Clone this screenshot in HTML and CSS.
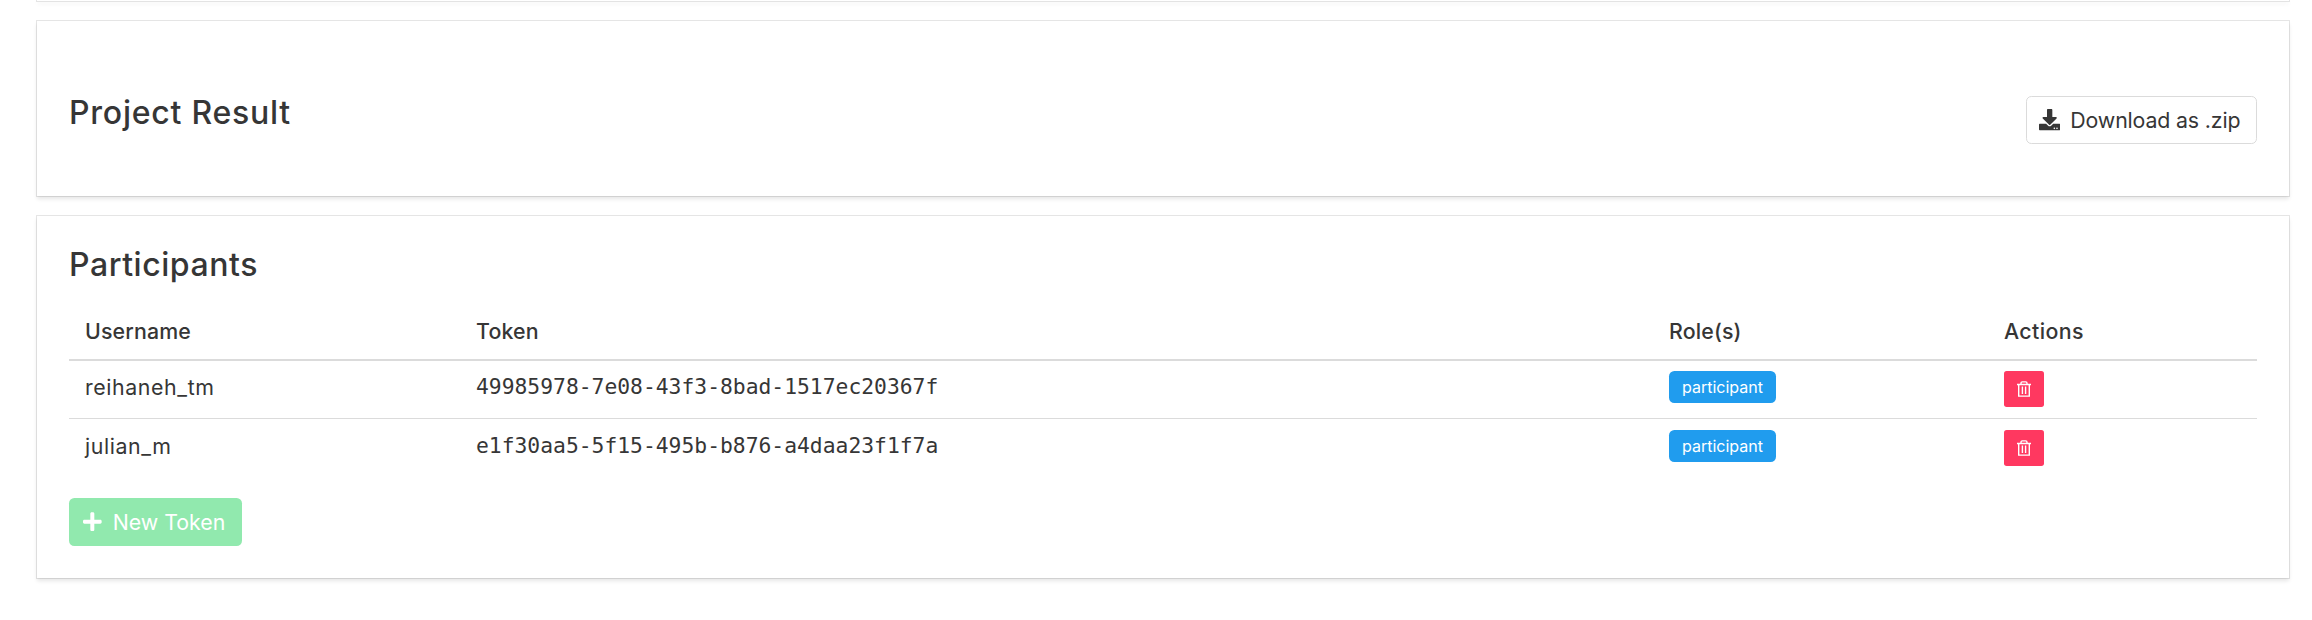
FILE: index.html
```html
<!DOCTYPE html>
<html lang="en">
<head>
<meta charset="utf-8">
<title>Project</title>
<link rel="stylesheet" href="styles.css">
</head>
<body>
<main class="page">
  <section class="box box-previous"></section>
  <section class="box box-result">
    <h2 class="title title-result">Project Result</h2>
    <button class="button button-download">
      <svg class="icon" viewBox="0 0 512 512"><path d="M216 0h80c13.300 0 24 10.700 24 24v168h87.700c17.800 0 26.700 21.500 14.100 34.100L269.700 378.300c-7.500 7.500-19.800 7.500-27.300 0L90.100 226.100c-12.600-12.600-3.700-34.100 14.100-34.100H192V24c0-13.300 10.700-24 24-24zm296 376v112c0 13.300-10.700 24-24 24H24c-13.300 0-24-10.700-24-24V376c0-13.300 10.700-24 24-24h146.700l49 49c20.100 20.100 52.500 20.100 72.600 0l49-49H488c13.300 0 24 10.700 24 24zm-124 88c0-11-9-20-20-20s-20 9-20 20 9 20 20 20 20-9 20-20zm64 0c0-11-9-20-20-20s-20 9-20 20 9 20 20 20 20-9 20-20z"/></svg>
      <span class="label-download">Download as .zip</span>
    </button>
  </section>
  <section class="box box-participants">
    <h2 class="title title-participants">Participants</h2>
    <table class="table">
      <colgroup><col class="col-user"><col class="col-token"><col class="col-role"><col class="col-actions"></colgroup>
      <thead>
        <tr><th>Username</th><th>Token</th><th>Role(s)</th><th class="th-actions">Actions</th></tr>
      </thead>
      <tbody>
        <tr>
          <td class="user">reihaneh_tm</td>
          <td class="mono">49985978-7e08-43f3-8bad-1517ec20367f</td>
          <td><span class="tag">participant</span></td>
          <td><button class="delete" aria-label="Delete"><svg class="trash" viewBox="0 0 14 16"><path d="M0 3.500h14M4 3.500V2.200Q4 .9 5.300.9h3.400Q10 .9 10 2.200v1.300M1.700 3.500v11.600h10.600V3.500M5.400 5.500v7.500M8.600 5.500v7.500"/></svg></button></td>
        </tr>
        <tr>
          <td class="user">julian_m</td>
          <td class="mono">e1f30aa5-5f15-495b-b876-a4daa23f1f7a</td>
          <td><span class="tag">participant</span></td>
          <td><button class="delete" aria-label="Delete"><svg class="trash" viewBox="0 0 14 16"><path d="M0 3.500h14M4 3.500V2.200Q4 .9 5.300.9h3.400Q10 .9 10 2.200v1.300M1.700 3.500v11.600h10.600V3.500M5.400 5.500v7.500M8.600 5.500v7.500"/></svg></button></td>
        </tr>
      </tbody>
    </table>
    <button class="button button-new" disabled>
      <svg class="icon icon-plus" viewBox="0 0 448 512"><path d="M416 208H272V64c0-17.670-14.330-32-32-32h-32c-17.670 0-32 14.330-32 32v144H32c-17.670 0-32 14.330-32 32v32c0 17.670 14.330 32 32 32h144v144c0 17.670 14.330 32 32 32h32c17.670 0 32-14.330 32-32V304h144c17.670 0 32-14.330 32-32v-32c0-17.670-14.330-32-32-32z"/></svg>
      <span class="label-new">New Token</span>
    </button>
  </section>
</main>
</body>
</html>
```
FILE: styles.css
```css
* { box-sizing: border-box; margin: 0; padding: 0; }
html { background: #fff; }
body {
  min-height: 620px;
  color: #363636;
  font-family: Inter, "Noto Sans", sans-serif;
  font-size: 21.333px;
  line-height: 32px;
}
.page { height: 620px; padding: 0 23px 0 37px; display: flex; flex-direction: column; gap: 20px; }
.box {
  flex: none;
  background: #fff;
  padding: 32px;
  box-shadow: 0 2.667px 4px rgba(10, 10, 10, .1), 0 0 0 1px rgba(10, 10, 10, .1);
}
.box-previous { height: 1px; padding: 0; }
.box-result { height: 175px; display: flex; justify-content: space-between; align-items: flex-start; }
.box-participants { height: 362px; }
.title { font-size: 32px; line-height: 36px; font-weight: 500; white-space: nowrap; }
.title-result { margin-top: 42px; letter-spacing: .75px; }
.title-participants { margin-top: -1px; margin-bottom: 19px; letter-spacing: .55px; }
.button {
  display: flex;
  align-items: center;
  height: 48px;
  border: 1px solid #dbdbdb;
  border-radius: 5.333px;
  background: #fff;
  color: #363636;
  font: inherit;
  white-space: nowrap;
}
.icon { width: 21.333px; height: 21.333px; fill: currentColor; flex: none; }
.button-download { margin-top: 43px; width: 231px; padding-left: 12px; gap: 10px; }
.label-download { letter-spacing: -.15px; }
.table { width: 2188px; table-layout: fixed; border-collapse: separate; border-spacing: 0; }
.col-user { width: 391px; }
.col-token { width: 1193px; }
.col-role { width: 335px; }
.col-actions { width: 269px; }
th { height: 59px; padding: 13px 16px 12px; text-align: left; font-weight: 500; letter-spacing: .15px; border-bottom: 2px solid #dbdbdb; vertical-align: top; }
.th-actions { letter-spacing: .4px; }
td { height: 58px; padding: 10px 16px 0; vertical-align: top; border-bottom: 1px solid #dbdbdb; }
tbody tr:last-child td { border-bottom: 0; padding-top: 11px; }
.user { letter-spacing: .6px; }
.mono { font-family: "DejaVu Sans Mono", monospace; }
.tag {
  display: flex;
  align-items: center;
  justify-content: center;
  width: 107px;
  height: 32px;
  border-radius: 5.333px;
  background: #209cee;
  color: #fff;
  font-size: 16px;
}
.delete {
  display: flex;
  align-items: center;
  justify-content: center;
  width: 40px;
  height: 36px;
  border: 0;
  border-radius: 2.667px;
  background: #ff3860;
}
.trash { width: 14px; height: 16px; fill: none; stroke: #fff; stroke-width: 1.4; }
.button-new { width: 173px; margin-top: 21px; padding-left: 14px; gap: 11px; border: 0; background: #91e9ae; color: #fff; }
.icon-plus { width: 18.667px; }
```
